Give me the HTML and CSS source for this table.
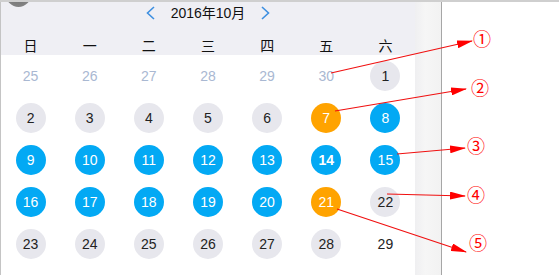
FILE: index.html
```html
<!DOCTYPE html>
<html lang="zh">
<head>
<meta charset="utf-8">
<link rel="stylesheet" href="styles.css">
</head>
<body>
<div class="screen">
  <div class="phone">
    <div class="calendar">
      <span class="notch"></span>
      <div class="cal-head">
        <div class="nav">
          <svg class="chev" width="9" height="14" viewBox="0 0 9 14"><polyline points="8,1 1.5,7 8,13" fill="none" stroke="#3d8fe0" stroke-width="1.6"/></svg>
          <span class="title">2016年10月</span>
          <svg class="chev" width="9" height="14" viewBox="0 0 9 14"><polyline points="1,1 7.5,7 1,13" fill="none" stroke="#3d8fe0" stroke-width="1.6"/></svg>
        </div>
        <div class="weekdays">
          <span>日</span><span>一</span><span>二</span><span>三</span><span>四</span><span>五</span><span>六</span>
        </div>
      </div>
      <div class="days">
        <div class="cell"><span class="d prev">25</span></div>
        <div class="cell"><span class="d prev">26</span></div>
        <div class="cell"><span class="d prev">27</span></div>
        <div class="cell"><span class="d prev">28</span></div>
        <div class="cell"><span class="d prev">29</span></div>
        <div class="cell"><span class="d prev">30</span></div>
        <div class="cell"><span class="d gray">1</span></div>

        <div class="cell"><span class="d gray">2</span></div>
        <div class="cell"><span class="d gray">3</span></div>
        <div class="cell"><span class="d gray">4</span></div>
        <div class="cell"><span class="d gray">5</span></div>
        <div class="cell"><span class="d gray">6</span></div>
        <div class="cell"><span class="d orange">7</span></div>
        <div class="cell"><span class="d blue">8</span></div>

        <div class="cell"><span class="d blue">9</span></div>
        <div class="cell"><span class="d blue">10</span></div>
        <div class="cell"><span class="d blue">11</span></div>
        <div class="cell"><span class="d blue">12</span></div>
        <div class="cell"><span class="d blue">13</span></div>
        <div class="cell"><span class="d blue today">14</span></div>
        <div class="cell"><span class="d blue">15</span></div>

        <div class="cell"><span class="d blue">16</span></div>
        <div class="cell"><span class="d blue">17</span></div>
        <div class="cell"><span class="d blue">18</span></div>
        <div class="cell"><span class="d blue">19</span></div>
        <div class="cell"><span class="d blue">20</span></div>
        <div class="cell"><span class="d orange">21</span></div>
        <div class="cell"><span class="d gray">22</span></div>

        <div class="cell"><span class="d gray">23</span></div>
        <div class="cell"><span class="d gray">24</span></div>
        <div class="cell"><span class="d gray">25</span></div>
        <div class="cell"><span class="d gray">26</span></div>
        <div class="cell"><span class="d gray">27</span></div>
        <div class="cell"><span class="d gray">28</span></div>
        <div class="cell"><span class="d">29</span></div>
      </div>
    </div>
    <div class="scroll"></div>
  </div>
  <div class="side"></div>
  <svg class="annot" width="559" height="275" viewBox="0 0 559 275">
    <defs>
      <marker id="ah" markerUnits="userSpaceOnUse" markerWidth="16" markerHeight="8" refX="15" refY="4" orient="auto">
        <path d="M0,0 L16,4 L0,8 z" fill="#f00"/>
      </marker>
    </defs>
    <g stroke="#f01010" stroke-width="1.2" fill="none" marker-end="url(#ah)">
      <line x1="331" y1="73" x2="472" y2="41"/>
      <line x1="335" y1="111" x2="466" y2="89"/>
      <line x1="397" y1="154" x2="465" y2="148"/>
      <line x1="387" y1="194" x2="465" y2="196"/>
      <line x1="337" y1="209" x2="466" y2="252"/>
    </g>
    <g class="nums" fill="#f00" text-anchor="middle">
      <text x="482" y="46">①</text>
      <text x="480" y="95">②</text>
      <text x="476" y="153">③</text>
      <text x="476" y="202">④</text>
      <text x="478" y="250">⑤</text>
    </g>
  </svg>
</div>
</body>
</html>
```

FILE: styles.css
```css
* { box-sizing: border-box; }
html, body { margin: 0; padding: 0; background: #fff; }
body { font-family: "Liberation Sans", Arial, "Noto Sans CJK SC", sans-serif; }

.screen {
  position: relative;
  width: 559px;
  height: 275px;
  border-top: 2px solid #cfcfcf;
  display: flex;
  overflow: hidden;
}

.phone {
  display: flex;
  border-left: 1px solid #c4c4c4;
  border-right: 1px solid #a6a6a6;
  height: 100%;
}

.calendar {
  position: relative;
  width: 414px;
  display: flex;
  flex-direction: column;
}

.notch {
  position: absolute;
  left: 5px;
  top: -20px;
  width: 25px;
  height: 25px;
  border-radius: 50%;
  background: radial-gradient(circle at 50% 40%, #6c6c6c, #8a8a8a);
}

.cal-head {
  background: #efeff4;
  height: 53px;
  display: flex;
  flex-direction: column;
}

.nav {
  height: 21px;
  display: flex;
  align-items: center;
  justify-content: center;
  gap: 16px;
  padding-top: 1px;
}

.chev { display: block; }

.title {
  font-size: 14px;
  color: #111;
  font-family: "Liberation Sans", Arial, "Noto Sans CJK SC", sans-serif;
  line-height: 20px;
}

.weekdays {
  display: grid;
  grid-template-columns: repeat(7, 1fr);
  padding-top: 12px;
  line-height: 20px;
  font-size: 14px;
  font-family: "Noto Sans CJK SC", sans-serif;
  color: #111;
  text-align: center;
}

.days {
  display: grid;
  grid-template-columns: repeat(7, 1fr);
  grid-auto-rows: 42px;
}

.cell {
  display: flex;
  align-items: center;
  justify-content: center;
}

.d {
  width: 30px;
  height: 30px;
  border-radius: 50%;
  display: flex;
  align-items: center;
  justify-content: center;
  font-size: 14px;
  color: #222;
}

.d.prev { color: #a9b8d2; }
.d.gray { background: #e7e7ed; }
.d.blue { background: #03a9f4; color: #fff; }
.d.orange { background: #ffa300; color: #fff; }
.d.today { font-weight: bold; }

.scroll {
  width: 26px;
  background: linear-gradient(to right, #efeff1, #f6f6f6 40%, #f2f2f2);
}

.side {
  flex: 1;
  background: #fff;
}

.annot {
  position: absolute;
  left: 0;
  top: -2px;
  pointer-events: none;
}

.nums text {
  font-family: "Noto Sans CJK SC", sans-serif;
  font-size: 18px;
}
```
